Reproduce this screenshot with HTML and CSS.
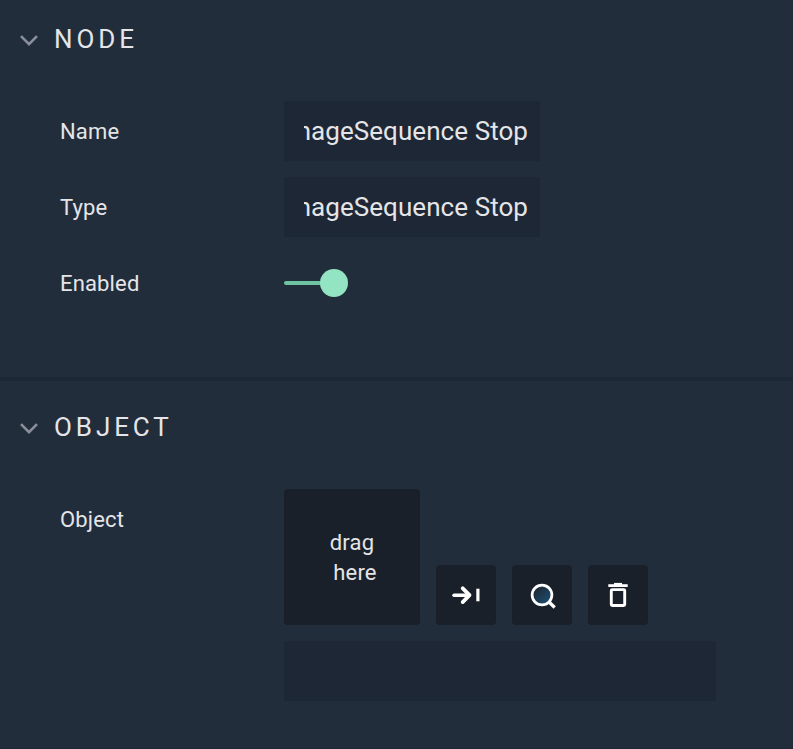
FILE: index.html
```
<!DOCTYPE html>
<html lang="en">
<head>
<meta charset="utf-8">
<title>Node properties</title>
<link rel="stylesheet" href="styles.css">
</head>
<body>
<section class="panel panel-node">
  <header class="head">
    <svg class="chevron" width="18" height="12" viewBox="0 0 18 12"><path d="M1 1.2 L9 9.2 L17 1.2"/></svg>
    <h2>NODE</h2>
  </header>
  <div class="row"><span class="label">Name</span><div class="field"><div class="value"><span>ImageSequence Stop</span></div></div></div>
  <div class="row"><span class="label">Type</span><div class="field"><div class="value"><span>ImageSequence Stop</span></div></div></div>
  <div class="row"><span class="label">Enabled</span><div class="toggle"><span class="track"></span><span class="knob"></span></div></div>
</section>
<section class="panel panel-object">
  <header class="head">
    <svg class="chevron" width="18" height="12" viewBox="0 0 18 12"><path d="M1 1.2 L9 9.2 L17 1.2"/></svg>
    <h2>OBJECT</h2>
  </header>
  <div class="row row-object">
    <span class="label">Object</span>
    <div class="picker">
      <div class="tools">
        <div class="drop"><span class="drag">drag</span><span class="here">here</span></div>
        <button class="tool" aria-label="Use selected">
          <svg width="60" height="60" viewBox="0 0 60 60" fill="none" stroke="#fff"><path d="M18 30.2H33" stroke-width="3.4" stroke-linecap="round"/><path d="M26.7 23.3L33.5 30.2L26.7 37.1" stroke-width="3.8" stroke-linecap="round" stroke-linejoin="round"/><path d="M41.9 23.7V36.3" stroke-width="3.2"/></svg>
        </button>
        <button class="tool" aria-label="Find">
          <svg width="60" height="60" viewBox="0 0 60 60" fill="none" stroke="#fff"><defs><linearGradient id="lens" x1="0" y1="0" x2="1" y2="1"><stop offset="0.2" stop-color="#1f2b38"/><stop offset="0.9" stop-color="#1b4f72"/></linearGradient></defs><circle cx="30" cy="30" r="9.9" fill="url(#lens)" stroke-width="2.7"/><path d="M37 37L42.7 42.5" stroke-width="3.2"/></svg>
        </button>
        <button class="tool" aria-label="Delete">
          <svg width="60" height="60" viewBox="0 0 60 60" fill="none" stroke="#fff"><path d="M20.3 20.6H39.7" stroke-width="2.8"/><path d="M26 18.9H34" stroke-width="2"/><rect x="23.3" y="24.6" width="13.4" height="15.9" rx="1" stroke-width="2.9"/></svg>
        </button>
      </div>
      <div class="field wide"></div>
    </div>
  </div>
</section>
</body>
</html>
```
FILE: styles.css
```
* { box-sizing: border-box; }
body {
  margin: 0;
  height: 749px;
  overflow: hidden;
  background: #222d3c;
  color: #e5e5e8;
  font-family: Roboto, sans-serif;
  font-size: 22px;
}
.panel { border-bottom: 4px solid #1e2735; }
.panel-node { height: 381px; }
.panel-object { height: 371px; }
.head {
  display: flex;
  align-items: center;
  height: 78px;
  margin-bottom: 23px;
  padding-left: 20px;
  gap: 16px;
}
.panel-object .head { height: 92px; margin-bottom: 16px; }
.chevron { margin-top: 4px; fill: none; stroke: #8b8f9b; stroke-width: 2.6; }
h2 { margin: 0; font-size: 26px; font-weight: 400; letter-spacing: 3.9px; line-height: 30px; }
.row {
  display: flex;
  align-items: center;
  height: 60px;
  margin-bottom: 16px;
  padding-left: 60px;
}
.row-object { align-items: flex-start; }
.label { width: 224px; padding-top: 2px; line-height: 60px; letter-spacing: 0.15px; }
.row-object .label { padding-top: 1px; }
.field {
  width: 256px;
  height: 60px;
  padding: 0 12px 0 20px;
  border-radius: 2px;
  background: #1e2735;
}
.value {
  display: flex;
  justify-content: flex-end;
  overflow: hidden;
  font-size: 26px;
  line-height: 60px;
  letter-spacing: 0.06px;
  white-space: nowrap;
}
.wide { width: 432px; }
.toggle { display: flex; align-items: center; }
.track { width: 38px; height: 4px; margin-right: -2px; border-radius: 2px; background: #70c3a1; }
.knob { width: 28px; height: 28px; border-radius: 50%; background: #92e4c3; }
.picker { display: flex; flex-direction: column; gap: 16px; }
.tools { display: flex; align-items: flex-end; gap: 16px; }
.drop {
  display: flex;
  flex-direction: column;
  align-items: center;
  justify-content: center;
  width: 136px;
  height: 136px;
  padding-top: 2px;
  border-radius: 4px;
  background: #1a2029;
  line-height: 30px;
  letter-spacing: 0.2px;
}
.here { padding-left: 6px; }
.tool { width: 60px; height: 60px; padding: 0; border: 0; border-radius: 4px; background: #1a2029; }
.tool svg { display: block; }
```
